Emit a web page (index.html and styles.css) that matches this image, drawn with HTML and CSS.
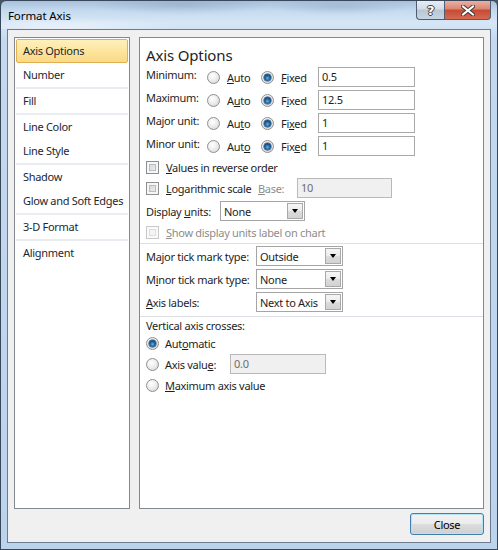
FILE: index.html
```html
<!DOCTYPE html>
<html lang="en">
<head>
    <meta charset="UTF-8">
    <title>Format Axis</title>
    <link rel="stylesheet" href="styles.css">
</head>
<body>
    <div class="window">
        <div class="titlebar">
            <span class="title">Format Axis</span>
            <div class="caption">
                <span class="cap help">?</span>
                <span class="cap close">
                    <svg width="14" height="11" viewBox="0 0 14 11">
                        <path d="M2 1.5 L12 9.5 M12 1.5 L2 9.5" stroke="#3b3b3b" stroke-width="4" stroke-linecap="square"/>
                        <path d="M2 1.5 L12 9.5 M12 1.5 L2 9.5" stroke="#ffffff" stroke-width="2" stroke-linecap="square"/>
                    </svg>
                </span>
            </div>
        </div>

        <div class="client">
            <div class="panes">
                <ul class="nav">
                    <li class="active">Axis Options</li>
                    <li>Number</li>
                    <li class="sep"></li>
                    <li>Fill</li>
                    <li class="sep"></li>
                    <li>Line Color</li>
                    <li>Line Style</li>
                    <li class="sep"></li>
                    <li>Shadow</li>
                    <li>Glow and Soft Edges</li>
                    <li class="sep"></li>
                    <li>3-D Format</li>
                    <li class="sep"></li>
                    <li>Alignment</li>
                </ul>

                <div class="page">
                    <h1>Axis Options</h1>

                    <div class="bounds">
                        <span class="lbl">Minimum:</span>
                        <span class="opt"><i class="radio"></i><span><u>A</u>uto</span></span>
                        <span class="opt"><i class="radio on"></i><span><u>F</u>ixed</span></span>
                        <span class="field">0.5</span>

                        <span class="lbl">Maximum:</span>
                        <span class="opt"><i class="radio"></i><span>A<u>u</u>to</span></span>
                        <span class="opt"><i class="radio on"></i><span>F<u>i</u>xed</span></span>
                        <span class="field">12.5</span>

                        <span class="lbl">Major unit:</span>
                        <span class="opt"><i class="radio"></i><span>Au<u>t</u>o</span></span>
                        <span class="opt"><i class="radio on"></i><span>Fi<u>x</u>ed</span></span>
                        <span class="field">1</span>

                        <span class="lbl">Minor unit:</span>
                        <span class="opt"><i class="radio"></i><span>Aut<u>o</u></span></span>
                        <span class="opt"><i class="radio on"></i><span>Fix<u>e</u>d</span></span>
                        <span class="field">1</span>
                    </div>

                    <div class="row first">
                        <i class="check"></i><span><u>V</u>alues in reverse order</span>
                    </div>
                    <div class="row">
                        <i class="check"></i><span class="log-lbl"><u>L</u>ogarithmic scale</span>
                        <span class="base-lbl dim"><u>B</u>ase:</span>
                        <span class="field off base">10</span>
                    </div>
                    <div class="row units">
                        <span class="units-lbl">Display <u>u</u>nits:</span>
                        <span class="select units-sel"><span>None</span><i class="drop"></i></span>
                    </div>
                    <div class="row">
                        <i class="check off"></i><span class="dim"><u>S</u>how display units label on chart</span>
                    </div>

                    <div class="rule"></div>

                    <div class="ticks">
                        <span>Ma<u>j</u>or tick mark type:</span>
                        <span class="select"><span>Outside</span><i class="drop"></i></span>
                        <span>M<u>i</u>nor tick mark type:</span>
                        <span class="select"><span>None</span><i class="drop"></i></span>
                        <span><u>A</u>xis labels:</span>
                        <span class="select"><span>Next to Axis</span><i class="drop"></i></span>
                    </div>

                    <div class="rule"></div>

                    <div class="crosses">
                        <div class="caption-lbl">Vertical axis crosses:</div>
                        <div class="row">
                            <i class="radio on"></i><span>Aut<u>o</u>matic</span>
                        </div>
                        <div class="row value">
                            <i class="radio"></i><span class="value-lbl">Axis valu<u>e</u>:</span>
                            <span class="field off value-box">0.0</span>
                        </div>
                        <div class="row">
                            <i class="radio"></i><span><u>M</u>aximum axis value</span>
                        </div>
                    </div>
                </div>
            </div>

            <div class="footer">
                <button class="btn">Close</button>
            </div>
        </div>
    </div>
</body>
</html>
```

FILE: styles.css
```css
body {
    margin: 0;
    background: #4a5563;
    font-family: "Noto Sans", sans-serif;
    font-size: 11px;
    letter-spacing: -0.3px;
    color: #1e1e1e;
}
.window {
    width: 498px;
    height: 550px;
    box-sizing: border-box;
    border: 1px solid #39475a;
    border-radius: 6px 6px 0 0;
    background: linear-gradient(to bottom, #a7c0da 0, #c6dbf0 10px, #d6e6f6 22px, #c4d9ef 40px, #bcd3ec 100%);
    display: flex;
    flex-direction: column;
}
.titlebar {
    height: 28px;
    display: flex;
    align-items: center;
    padding-left: 7px;
    background:
        radial-gradient(ellipse 90px 10px at 180px 4px, rgba(120, 150, 180, 0.35), transparent),
        radial-gradient(ellipse 70px 8px at 340px 6px, rgba(120, 150, 180, 0.3), transparent),
        radial-gradient(ellipse 120px 10px at 60px 26px, rgba(255, 255, 255, 0.5), transparent);
}
.title {
    font-size: 11.5px;
    letter-spacing: -0.1px;
    color: #000;
}
.caption {
    margin-left: auto;
    margin-right: 6px;
    align-self: flex-start;
    display: flex;
}
.cap {
    height: 19px;
    box-sizing: border-box;
    border: 1px solid #4e5d70;
    border-top: none;
    display: flex;
    align-items: center;
    justify-content: center;
}
.help {
    width: 28px;
    border-right: none;
    border-radius: 0 0 0 4px;
    background: linear-gradient(to bottom, #e6edf4 0, #d3dde8 45%, #b7c5d5 50%, #c8d5e2 100%);
    color: #fff;
    font-weight: bold;
    font-size: 13px;
    font-family: "DejaVu Sans", sans-serif;
    text-shadow: 1px 0 #3b3b3b, -1px 0 #3b3b3b, 0 1px #3b3b3b, 0 -1px #3b3b3b;
}
.close {
    width: 47px;
    border-radius: 0 0 4px 0;
    background: linear-gradient(to bottom, #eab0a2 0, #dc8571 45%, #c54a33 50%, #d5694f 100%);
}
.client {
    flex: 1;
    margin: 0 6px 6px 6px;
    border: 1px solid #6c7b8f;
    background: #f0f0f0;
    padding: 7px 6px 7px 6px;
    display: flex;
    flex-direction: column;
}
.panes {
    height: 472px;
    display: flex;
    gap: 9px;
}
.nav {
    width: 116px;
    box-sizing: border-box;
    margin: 0;
    padding: 1px;
    list-style: none;
    background: #fff;
    border: 1px solid #828790;
    color: #1c2733;
}
.nav li {
    height: 24px;
    line-height: 24px;
    padding-left: 7px;
    white-space: nowrap;
}
.nav li.active {
    box-sizing: border-box;
    padding-left: 6px;
    line-height: 22px;
    border: 1px solid #e0b154;
    border-radius: 2px;
    background: linear-gradient(to bottom, #fef0bd 0, #fde59e 50%, #fbd885 100%);
}
.nav li.sep {
    height: 2px;
    background: #e9edf1;
}
.page {
    flex: 1;
    background: #fff;
    border: 1px solid #828790;
    padding: 0 6px;
}
.page h1 {
    margin: 0;
    padding-top: 7px;
    font-size: 15px;
    line-height: 20px;
    font-weight: normal;
    letter-spacing: -0.15px;
}
.bounds {
    margin-top: 2px;
    display: grid;
    grid-template-columns: 61px 54px 57px 97px;
    grid-auto-rows: 20px;
    row-gap: 3px;
    align-items: center;
}
.bounds .lbl {
    align-self: start;
    line-height: 15px;
}
.opt {
    display: flex;
    align-items: center;
    gap: 7px;
    padding-top: 1px;
}
.field {
    height: 20px;
    box-sizing: border-box;
    border: 1px solid #a9a9a9;
    padding-left: 3px;
    line-height: 18px;
    background: #fff;
}
.field.off {
    background: #f0f0f0;
    border-color: #b9b9b9;
    color: #6d6d6d;
}
.radio {
    width: 13px;
    height: 13px;
    box-sizing: border-box;
    border-radius: 50%;
    border: 1px solid #8e8f8f;
    background: radial-gradient(circle at 40% 35%, #ffffff 0, #f0f0f0 40%, #d0d0d0 100%);
    position: relative;
    flex: none;
}
.radio.on::after {
    content: "";
    position: absolute;
    left: 2px;
    top: 2px;
    width: 7px;
    height: 7px;
    border-radius: 50%;
    background: radial-gradient(circle at 50% 60%, #5fb8e6 0, #1c5e9c 45%, #0b2f55 100%);
    box-shadow: 0 0 0 0.5px #1d3f63;
}
.check {
    width: 13px;
    height: 13px;
    box-sizing: border-box;
    border: 1px solid #8e8f8f;
    background: linear-gradient(135deg, #cfd1d4 0, #f4f4f4 100%);
    box-shadow: inset 0 0 0 2px #f6f6f6, inset 0 0 0 3px #b9bcc0;
    flex: none;
}
.check.off {
    border-color: #c8c8c8;
    background: #f4f4f4;
    box-shadow: inset 0 0 0 2px #fafafa, inset 0 0 0 3px #dedede;
}
.row {
    display: flex;
    align-items: center;
    gap: 7px;
    height: 20px;
    margin-top: 1px;
    white-space: nowrap;
}
.log-lbl {
    width: 85px;
}
.base-lbl {
    width: 32px;
}
.base {
    width: 95px;
}
.dim {
    color: #8d8d8d;
}
.row.units {
    margin-top: 3px;
    gap: 0;
}
.units-lbl {
    width: 74px;
}
.units-sel {
    width: 85px;
}
.select {
    height: 20px;
    box-sizing: border-box;
    border: 1px solid #a5a5a5;
    background: #fff;
    padding: 1px;
    display: flex;
    align-items: center;
}
.select span {
    flex: 1;
    padding-left: 2px;
}
.drop {
    width: 16px;
    height: 16px;
    box-sizing: border-box;
    border: 1px solid #a9a9a9;
    background: linear-gradient(to bottom, #f6f6f6 0, #ebebeb 50%, #dcdcdc 51%, #d2d2d2 100%);
    display: flex;
    align-items: center;
    justify-content: center;
}
.drop::before {
    content: "";
    border-left: 3.5px solid transparent;
    border-right: 3.5px solid transparent;
    border-top: 4px solid #000;
}
.rule {
    height: 1px;
    background: #dcdfe3;
    margin: 1px -6px 0 -6px;
}
.ticks {
    margin-top: 2px;
    display: grid;
    grid-template-columns: 110px 87px;
    grid-auto-rows: 20px;
    row-gap: 3px;
    align-items: center;
    margin-bottom: 4px;
}
.crosses .caption-lbl {
    line-height: 16px;
    margin-top: 1px;
}
.crosses .row {
    gap: 6px;
    height: 16px;
}
.crosses .row.value {
    height: 20px;
    margin-top: 3px;
    margin-bottom: 3px;
}
.value-lbl {
    width: 59px;
}
.value-box {
    width: 96px;
}
.footer {
    margin-top: 4px;
    display: flex;
    justify-content: flex-end;
}
.btn {
    width: 74px;
    height: 22px;
    border: 1px solid #3c7fb1;
    border-radius: 3px;
    background: linear-gradient(to bottom, #f2f2f2 0, #ebebeb 50%, #dddddd 51%, #cfcfcf 100%);
    box-shadow: inset 0 0 0 1px #b6e4f7;
    font-family: "Noto Sans", sans-serif;
    font-size: 11px;
    letter-spacing: -0.3px;
    color: #000;
    padding: 0;
}
```
